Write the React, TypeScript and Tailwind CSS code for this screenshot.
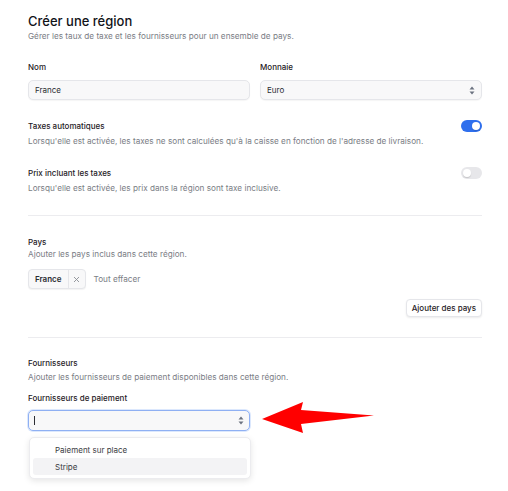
import React from "react";

function Toggle({ on }: { on: boolean }) {
  return (
    <div
      className={`mt-[0px] flex h-[12px] w-[21px] shrink-0 items-center rounded-full px-[2px] ${
        on ? "justify-end bg-[#2f6fed]" : "justify-start bg-[#e7e7ea]"
      }`}
    >
      <div className="h-[8px] w-[8px] rounded-full bg-white shadow-[0_1px_1px_rgba(0,0,0,.15)]" />
    </div>
  );
}

function UpDown() {
  return (
    <svg width="6" height="9" viewBox="0 0 6 9" className="text-[#6b7280]">
      <path d="M3 0.5 L5.5 3.5 H0.5 Z" fill="currentColor" />
      <path d="M3 8.5 L5.5 5.5 H0.5 Z" fill="currentColor" />
    </svg>
  );
}

function SwitchRow({ title, desc, on }: { title: string; desc: string; on: boolean }) {
  return (
    <div className="flex items-start justify-between">
      <div>
        <p className="text-[8px] leading-[12px] font-medium text-[#1f2126]">{title}</p>
        <p className="mt-[3px] text-[8.2px] leading-[12px] text-[#7a7d85]">{desc}</p>
      </div>
      <Toggle on={on} />
    </div>
  );
}

export default function App() {
  return (
    <div className="relative min-h-[491px] w-[508px] bg-white pl-[28px] pr-[26px] pt-[13px] font-['Inter',sans-serif]">
      {/* en-tête */}
      <h1 className="text-[13px] leading-[16px] font-medium text-[#111318]">Créer une région</h1>
      <p className="mt-[1px] text-[8.2px] leading-[12px] text-[#7a7d85]">
        Gérer les taux de taxe et les fournisseurs pour un ensemble de pays.
      </p>

      {/* nom + monnaie */}
      <div className="mt-[19px] grid grid-cols-2 gap-[10px]">
        <div>
          <p className="text-[8px] leading-[12px] font-medium text-[#1f2126]">Nom</p>
          <div className="mt-[7px] flex h-[20px] items-center rounded-[5px] border border-[#e5e6ea] bg-[#f8f8f9] px-[6px] text-[8px] text-[#2b2d33] shadow-[0_1px_1px_rgba(0,0,0,.04)]">
            France
          </div>
        </div>
        <div>
          <p className="text-[8px] leading-[12px] font-medium text-[#1f2126]">Monnaie</p>
          <div className="mt-[7px] flex h-[20px] items-center justify-between rounded-[5px] border border-[#e5e6ea] bg-[#f8f8f9] px-[6px] text-[8px] text-[#2b2d33] shadow-[0_1px_1px_rgba(0,0,0,.04)]">
            <span>Euro</span>
            <UpDown />
          </div>
        </div>
      </div>

      {/* taxes */}
      <div className="mt-[20px]">
        <SwitchRow
          title="Taxes automatiques"
          desc="Lorsqu'elle est activée, les taxes ne sont calculées qu'à la caisse en fonction de l'adresse de livraison."
          on
        />
      </div>
      <div className="mt-[20px]">
        <SwitchRow
          title="Prix incluant les taxes"
          desc="Lorsqu'elle est activée, les prix dans la région sont taxe inclusive."
          on={false}
        />
      </div>

      <div className="mt-[21px] border-t border-[#ececef]" />

      {/* pays */}
      <div className="mt-[20px]">
        <p className="text-[8px] leading-[12px] font-medium text-[#1f2126]">Pays</p>
        <p className="text-[8.2px] leading-[12px] text-[#7a7d85]">Ajouter les pays inclus dans cette région.</p>
        <div className="mt-[9px] flex items-center gap-[8px]">
          <div className="flex h-[20px] items-center rounded-[4px] border border-[#e5e6ea] bg-[#f8f8f9] shadow-[0_1px_1px_rgba(0,0,0,.05)]">
            <span className="px-[6px] text-[8px] font-semibold text-[#2b2d33]">France</span>
            <span className="flex h-full w-[17px] items-center justify-center border-l border-[#e5e6ea] text-[#8a8d94]">
              <svg width="7" height="7" viewBox="0 0 7 7">
                <path d="M1 1 L6 6 M6 1 L1 6" stroke="currentColor" strokeWidth="0.9" />
              </svg>
            </span>
          </div>
          <span className="text-[8.2px] text-[#7a7d85]">Tout effacer</span>
        </div>
        <div className="mt-[10px] flex justify-end">
          <button className="h-[18px] rounded-[4px] border border-[#e5e6ea] bg-white px-[5px] text-[8px] font-medium text-[#1f2126] shadow-[0_1px_2px_rgba(0,0,0,.08)]">
            Ajouter des pays
          </button>
        </div>
      </div>

      <div className="mt-[20px] border-t border-[#ececef]" />

      {/* fournisseurs */}
      <div className="mt-[19px]">
        <p className="text-[8px] leading-[12px] font-medium text-[#1f2126]">Fournisseurs</p>
        <p className="mt-[2px] text-[8.2px] leading-[12px] text-[#7a7d85]">
          Ajouter les fournisseurs de paiement disponibles dans cette région.
        </p>
        <p className="mt-[9px] text-[8px] leading-[12px] font-medium text-[#1f2126]">Fournisseurs de paiement</p>
        <div className="relative mt-[6px] w-[222px]">
          <div className="flex h-[21px] items-center justify-between rounded-[5px] border border-[#8fb0f3] bg-[#f8f8f9] px-[5px] shadow-[0_0_0_1px_rgba(59,130,246,.18)]">
            <span className="h-[9px] w-px bg-[#2b2d33]" />
            <UpDown />
          </div>
          {/* menu déroulant */}
          <div className="absolute left-[1px] top-[27px] w-[222px] rounded-[5px] border border-[#ececef] bg-white p-[3px] shadow-[0_2px_6px_rgba(0,0,0,.1)]">
            <div className="flex h-[17px] items-center pl-[22px] text-[8px] text-[#3a3c42]">Paiement sur place</div>
            <div className="flex h-[17px] items-center rounded-[3px] bg-[#f3f3f5] pl-[22px] text-[8px] text-[#3a3c42]">
              Stripe
            </div>
          </div>
        </div>
      </div>

      {/* flèche d'annotation */}
      <svg className="absolute left-0 top-0" width="508" height="491" viewBox="0 0 508 491">
        <polygon points="262,419 303,402 301,410 374,415.5 301,424 303,433" fill="#ff0000" />
      </svg>
    </div>
  );
}
